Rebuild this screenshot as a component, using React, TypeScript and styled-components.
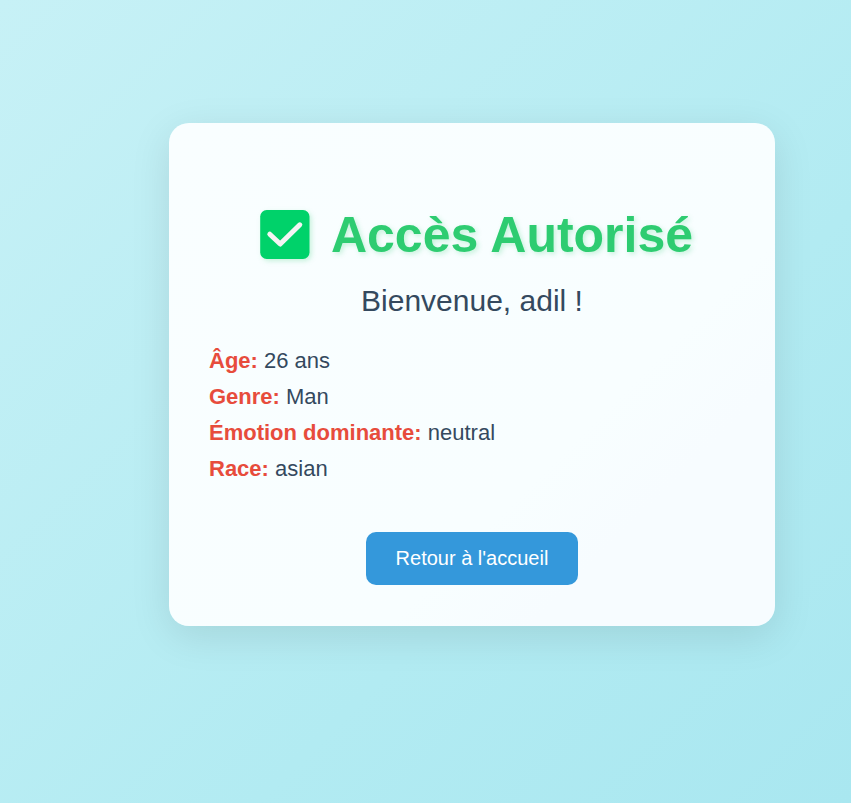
import React from "react";
import styled, { createGlobalStyle } from "styled-components";

const GlobalStyle = createGlobalStyle`
  * { box-sizing: border-box; }
  body {
    margin: 0;
    font-family: "Liberation Sans", Arial, sans-serif;
  }
`;

const Page = styled.main`
  min-height: 803px;
  padding: 123px 76px 0 169px;
  background: linear-gradient(135deg, #c7f1f6 0%, #b2ebf2 64%, #a9e7f0 100%);
`;

const Card = styled.section`
  height: 503px;
  padding: 40px;
  border-radius: 20px;
  background: linear-gradient(135deg, #f9feff 0%, #f8feff 65%, #f7fcff 78%, #f7fcff 100%);
  box-shadow: 0 10px 40px rgba(0, 0, 0, 0.1);
  text-align: center;
`;

const Title = styled.h1`
  display: flex;
  justify-content: center;
  align-items: center;
  margin: 43px 0 0;
  padding-left: 9px;
  height: 57px;
  color: #2ecc71;
  font-size: 50px;
  line-height: 57px;
  white-space: nowrap;
  text-shadow: 2px 2px 5px rgba(46, 204, 113, 0.25);
`;

const TitleText = styled.span`
  padding-top: 2px;
`;

const CheckMark = styled.svg`
  width: 50px;
  height: 50px;
  margin-right: 21px;
  overflow: visible;
  filter: drop-shadow(2px 2px 2.5px rgba(46, 204, 113, 0.25));
`;

const Welcome = styled.p`
  margin: 20px 0 25px;
  color: #34495e;
  font-size: 30px;
  line-height: 35px;
`;

const Details = styled.div`
  text-align: left;
  color: #34495e;
  font-size: 22px;
  line-height: 36px;
`;

const Detail = styled.p`
  margin: 0;
`;

const Label = styled.strong`
  color: #e74c3c;
`;

const BackButton = styled.button`
  width: 212px;
  height: 53px;
  margin-top: 45px;
  padding: 0 0 1px;
  border: 0;
  border-radius: 10px;
  background: #3498db;
  color: #fff;
  font-family: inherit;
  font-size: 20px;
`;

const details = [
  ["Âge:", "26 ans"],
  ["Genre:", "Man"],
  ["Émotion dominante:", "neutral"],
  ["Race:", "asian"],
];

export default function App() {
  return (
    <Page>
      <GlobalStyle />
      <Card>
        <Title>
          <CheckMark viewBox="0 0 50 50" aria-hidden="true">
            <rect x="0.2" width="49.3" height="49" rx="6.5" fill="#00d26a" />
            <path d="M9.8 24.2 20.2 34 39.8 14.8" fill="none" stroke="#f4f4f4" strokeWidth="5" strokeLinecap="round" strokeLinejoin="round" />
          </CheckMark>
          <TitleText>Accès Autorisé</TitleText>
        </Title>
        <Welcome>Bienvenue, adil !</Welcome>
        <Details>
          {details.map(([label, value]) => (
            <Detail key={label}>
              <Label>{label}</Label> {value}
            </Detail>
          ))}
        </Details>
        <BackButton>Retour à l'accueil</BackButton>
      </Card>
    </Page>
  );
}
